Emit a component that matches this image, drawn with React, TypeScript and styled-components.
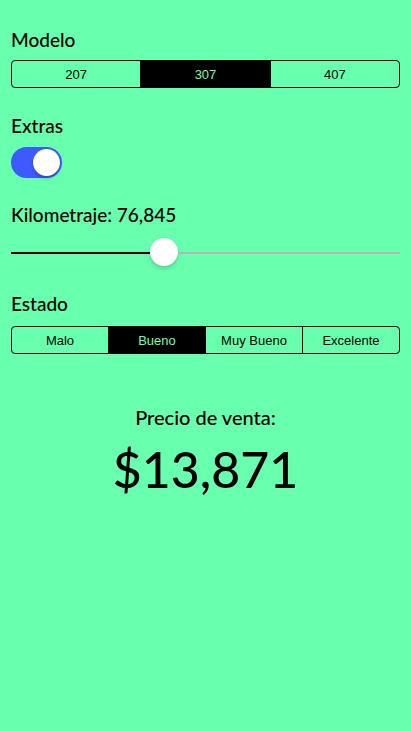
import React, { useState } from "react";
import styled, { createGlobalStyle } from "styled-components";

const BG = "#68FFAE";

const GlobalStyle = createGlobalStyle`
  html, body {
    margin: 0;
    padding: 0;
    background: ${BG};
  }
  * { box-sizing: border-box; }
`;

const Page = styled.div`
  min-height: 731px;
  background: ${BG};
  padding: 28px 11px 0;
  display: flex;
  flex-direction: column;
  font-family: "Lato", "Noto Sans", sans-serif;
  color: #000;
`;

const Section = styled.section<{ $gap: number; $mb: number }>`
  display: flex;
  flex-direction: column;
  gap: ${(p) => p.$gap}px;
  margin-bottom: ${(p) => p.$mb}px;
`;

const Label = styled.div`
  font-family: "Lato", "Noto Sans", sans-serif;
  font-size: 19px;
  line-height: 23px;
  font-weight: 500;
`;

const Segmented = styled.div`
  display: flex;
  height: 28px;
  border: 1px solid #000;
  border-radius: 4px;
  overflow: hidden;
`;

const SegmentItem = styled.button<{ $active: boolean }>`
  flex: 1;
  border: none;
  margin: 0;
  padding: 0;
  background: ${(p) => (p.$active ? "#000" : "transparent")};
  color: ${(p) => (p.$active ? BG : "#000")};
  font-family: "Liberation Sans", Arial, sans-serif;
  font-size: 13px;
  display: flex;
  align-items: center;
  justify-content: center;
  cursor: pointer;
  & + & {
    border-left: 1px solid #000;
  }
`;

const Toggle = styled.button<{ $on: boolean }>`
  width: 51px;
  height: 31px;
  border-radius: 16px;
  border: none;
  padding: 2px;
  background: ${(p) => (p.$on ? "#3D5AFE" : "#ccc")};
  display: flex;
  justify-content: ${(p) => (p.$on ? "flex-end" : "flex-start")};
  align-items: center;
  cursor: pointer;
`;

const Knob = styled.span`
  width: 27px;
  height: 27px;
  border-radius: 50%;
  background: #fff;
  box-shadow: 0 3px 3px rgba(0, 0, 0, 0.18), 0 0 1px rgba(0, 0, 0, 0.2);
`;

const SliderRow = styled.div`
  display: flex;
  align-items: center;
  height: 28px;
`;

const TrackFilled = styled.div`
  height: 2px;
  margin-top: 1px;
  background: #000;
`;

const TrackEmpty = styled.div`
  flex: 1;
  height: 2px;
  margin-top: 1px;
  background: #b4b4b4;
`;

const Thumb = styled.div`
  width: 28px;
  height: 28px;
  flex: none;
  border-radius: 50%;
  background: #fff;
  box-shadow: 0 3px 4px rgba(0, 0, 0, 0.15), 0 0 1px rgba(0, 0, 0, 0.15);
`;

const PriceBlock = styled.div`
  display: flex;
  flex-direction: column;
  align-items: center;
  gap: 9px;
  margin-top: 51px;
`;

const PriceCaption = styled.div`
  font-size: 20px;
  line-height: 24px;
  font-weight: 500;
`;

const PriceValue = styled.div`
  font-size: 50px;
  line-height: 62px;
  font-weight: 500;
`;

const modelos = ["207", "307", "407"];
const estados = ["Malo", "Bueno", "Muy Bueno", "Excelente"];

export default function App() {
  const [modelo, setModelo] = useState(1);
  const [estado, setEstado] = useState(1);
  const [extras, setExtras] = useState(true);
  const km = 76845;
  const fraction = km / 200000;

  return (
    <>
      <GlobalStyle />
      <Page>
        <Section $gap={9} $mb={26}>
          <Label>Modelo</Label>
          <Segmented>
            {modelos.map((m, i) => (
              <SegmentItem key={m} $active={i === modelo} onClick={() => setModelo(i)}>
                {m}
              </SegmentItem>
            ))}
          </Segmented>
        </Section>

        <Section $gap={10} $mb={25}>
          <Label>Extras</Label>
          <Toggle $on={extras} onClick={() => setExtras(!extras)}>
            <Knob />
          </Toggle>
        </Section>

        <Section $gap={12} $mb={26}>
          <Label>Kilometraje: {km.toLocaleString("en-US")}</Label>
          <SliderRow>
            <TrackFilled style={{ width: `calc(${fraction} * (100% - 28px))` }} />
            <Thumb />
            <TrackEmpty />
          </SliderRow>
        </Section>

        <Section $gap={11} $mb={0}>
          <Label>Estado</Label>
          <Segmented>
            {estados.map((e, i) => (
              <SegmentItem key={e} $active={i === estado} onClick={() => setEstado(i)}>
                {e}
              </SegmentItem>
            ))}
          </Segmented>
        </Section>

        <PriceBlock>
          <PriceCaption>Precio de venta:</PriceCaption>
          <PriceValue>$13,871</PriceValue>
        </PriceBlock>
      </Page>
    </>
  );
}
